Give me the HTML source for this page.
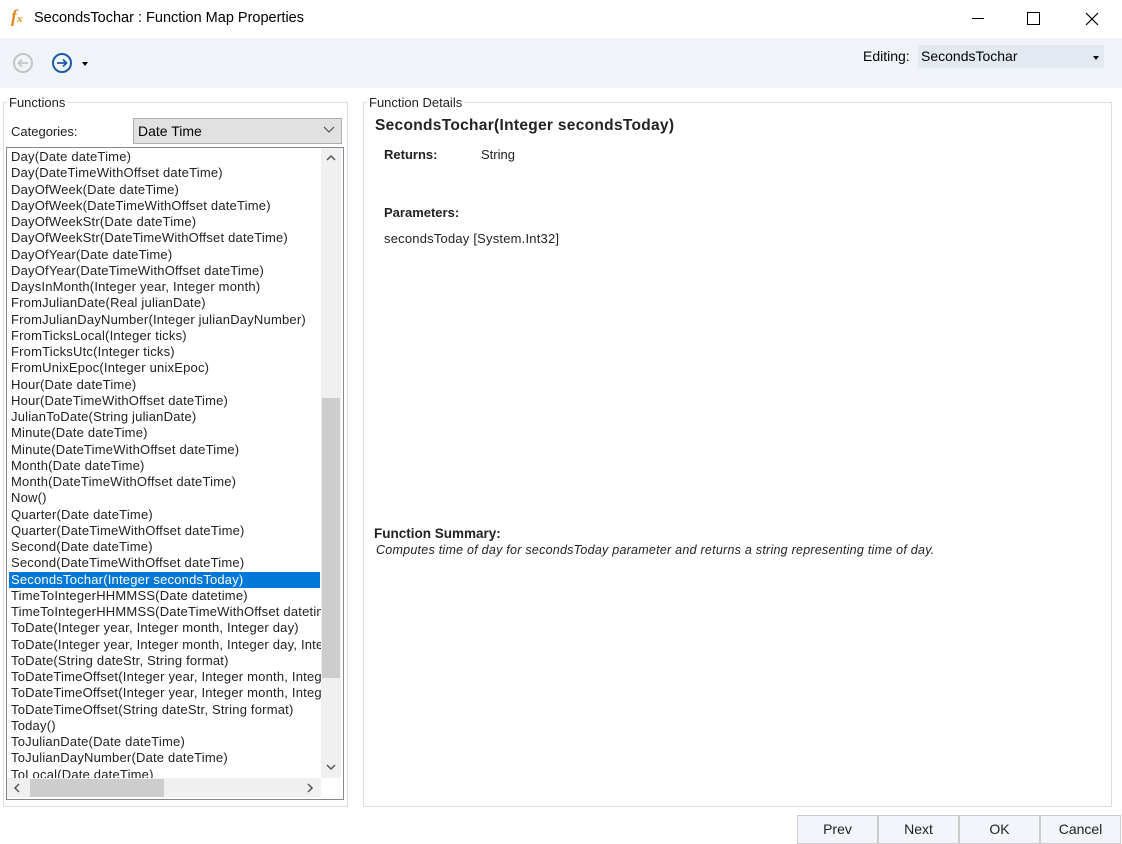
<!DOCTYPE html><html><head><style>
body{margin:0;width:1122px;height:844px;background:#fff;font-family:"Liberation Sans",sans-serif;position:relative;overflow:hidden;color:#000}
.a{position:absolute}
.li{position:absolute;left:11px;font-size:13px;letter-spacing:0.2px;white-space:nowrap;line-height:16px;color:#222}
.btn{position:absolute;top:815px;width:79px;height:27px;border:1px solid #ccc;background:#f2f5f9;font-size:14px;text-align:center;line-height:27px;color:#222}
</style></head><body>
<div class="a" style="left:11px;top:6px;font:italic bold 18px 'Liberation Serif',serif;color:#e08a1e">f<span style="font-size:11px">x</span></div>
<div class="a" style="left:34px;top:10px;font-size:14.5px">SecondsTochar : Function Map Properties</div>
<div class="a" style="left:972px;top:18px;width:12px;height:1px;background:#000"></div>
<div class="a" style="left:1027px;top:12px;width:11px;height:11px;border:1px solid #000"></div>
<svg class="a" style="left:1085px;top:12px" width="14" height="14"><path d="M1 1L13 13M13 1L1 13" stroke="#000" stroke-width="1.2"/></svg>
<div class="a" style="left:0;top:38px;width:1122px;height:50px;background:#f0f4f9"></div>
<svg class="a" style="left:12px;top:52px" width="22" height="22"><circle cx="11" cy="11" r="9" fill="none" stroke="#c4c4c4" stroke-width="2"/><path d="M16 11H7M10 7.5L6.5 11 10 14.5" fill="none" stroke="#c4c4c4" stroke-width="1.8"/></svg>
<svg class="a" style="left:51px;top:52px" width="22" height="22"><circle cx="11" cy="11" r="9" fill="none" stroke="#1e5aa8" stroke-width="2"/><path d="M6 11H15M12 7.5L15.5 11 12 14.5" fill="none" stroke="#1e5aa8" stroke-width="1.8"/></svg>
<div class="a" style="left:82px;top:62px;border:3px solid transparent;border-top:4px solid #000"></div>
<div class="a" style="left:863px;top:48px;font-size:14px">Editing:</div>
<div class="a" style="left:918px;top:45px;width:186px;height:23px;background:#e3e9f0"></div>
<div class="a" style="left:921px;top:48px;font-size:14px">SecondsTochar</div>
<div class="a" style="left:1093px;top:56px;border:3px solid transparent;border-top:4px solid #000"></div>
<div class="a" style="left:3px;top:102px;width:343px;height:703px;border:1px solid #dcdcdc"></div>
<div class="a" style="left:7px;top:95px;background:#fff;padding:0 2px;font-size:13px;color:#222">Functions</div>
<div class="a" style="left:11px;top:124px;font-size:13px;color:#222">Categories:</div>
<div class="a" style="left:133px;top:118px;width:207px;height:24px;border:1px solid #adadad;background:#e1e1e1"></div>
<div class="a" style="left:138px;top:123px;font-size:14px">Date Time</div>
<svg class="a" style="left:323px;top:126px" width="12" height="8"><path d="M1 1l5 5 5-5" fill="none" stroke="#444"/></svg>
<div class="a" style="left:6px;top:147px;width:336px;height:651px;border:1px solid #828790"></div>
<div class="a" style="left:321px;top:148px;width:20px;height:630px;background:#f0f0f0"></div>
<div class="a" style="left:322px;top:398px;width:18px;height:280px;background:#cdcdcd"></div>
<div class="a" style="left:7px;top:778px;width:314px;height:19px;background:#f0f0f0"></div>
<div class="a" style="left:30px;top:779px;width:134px;height:18px;background:#cdcdcd"></div>
<svg class="a" style="left:325px;top:154px" width="12" height="8"><path d="M2 6l4-4 4 4" fill="none" stroke="#555" stroke-width="1.5"/></svg>
<svg class="a" style="left:325px;top:763px" width="12" height="8"><path d="M2 2l4 4 4-4" fill="none" stroke="#555" stroke-width="1.5"/></svg>
<svg class="a" style="left:13px;top:782px" width="8" height="12"><path d="M6 2L2 6l4 4" fill="none" stroke="#555" stroke-width="1.5"/></svg>
<svg class="a" style="left:306px;top:782px" width="8" height="12"><path d="M2 2l4 4-4 4" fill="none" stroke="#555" stroke-width="1.5"/></svg>
<div class="a" style="left:9px;top:572px;width:311px;height:16px;background:#0078d7"></div>
<div class="a" style="left:7px;top:149px;width:314px;height:629px;overflow:hidden">
<div style="position:relative;left:-7px;top:0">
<div class="li" style="top:0">Day(Date dateTime)</div>
<div class="li" style="top:16.25px">Day(DateTimeWithOffset dateTime)</div>
<div class="li" style="top:32.5px">DayOfWeek(Date dateTime)</div>
<div class="li" style="top:48.75px">DayOfWeek(DateTimeWithOffset dateTime)</div>
<div class="li" style="top:65px">DayOfWeekStr(Date dateTime)</div>
<div class="li" style="top:81.25px">DayOfWeekStr(DateTimeWithOffset dateTime)</div>
<div class="li" style="top:97.5px">DayOfYear(Date dateTime)</div>
<div class="li" style="top:113.75px">DayOfYear(DateTimeWithOffset dateTime)</div>
<div class="li" style="top:130px">DaysInMonth(Integer year, Integer month)</div>
<div class="li" style="top:146.25px">FromJulianDate(Real julianDate)</div>
<div class="li" style="top:162.5px">FromJulianDayNumber(Integer julianDayNumber)</div>
<div class="li" style="top:178.75px">FromTicksLocal(Integer ticks)</div>
<div class="li" style="top:195px">FromTicksUtc(Integer ticks)</div>
<div class="li" style="top:211.25px">FromUnixEpoc(Integer unixEpoc)</div>
<div class="li" style="top:227.5px">Hour(Date dateTime)</div>
<div class="li" style="top:243.75px">Hour(DateTimeWithOffset dateTime)</div>
<div class="li" style="top:260px">JulianToDate(String julianDate)</div>
<div class="li" style="top:276.25px">Minute(Date dateTime)</div>
<div class="li" style="top:292.5px">Minute(DateTimeWithOffset dateTime)</div>
<div class="li" style="top:308.75px">Month(Date dateTime)</div>
<div class="li" style="top:325px">Month(DateTimeWithOffset dateTime)</div>
<div class="li" style="top:341.25px">Now()</div>
<div class="li" style="top:357.5px">Quarter(Date dateTime)</div>
<div class="li" style="top:373.75px">Quarter(DateTimeWithOffset dateTime)</div>
<div class="li" style="top:390px">Second(Date dateTime)</div>
<div class="li" style="top:406.25px">Second(DateTimeWithOffset dateTime)</div>
<div class="li" style="top:422.5px;color:#fff">SecondsTochar(Integer secondsToday)</div>
<div class="li" style="top:438.75px">TimeToIntegerHHMMSS(Date datetime)</div>
<div class="li" style="top:455px">TimeToIntegerHHMMSS(DateTimeWithOffset datetime)</div>
<div class="li" style="top:471.25px">ToDate(Integer year, Integer month, Integer day)</div>
<div class="li" style="top:487.5px">ToDate(Integer year, Integer month, Integer day, Integer hour)</div>
<div class="li" style="top:503.75px">ToDate(String dateStr, String format)</div>
<div class="li" style="top:520px">ToDateTimeOffset(Integer year, Integer month, Integer day)</div>
<div class="li" style="top:536.25px">ToDateTimeOffset(Integer year, Integer month, Integer day)</div>
<div class="li" style="top:552.5px">ToDateTimeOffset(String dateStr, String format)</div>
<div class="li" style="top:568.75px">Today()</div>
<div class="li" style="top:585px">ToJulianDate(Date dateTime)</div>
<div class="li" style="top:601.25px">ToJulianDayNumber(Date dateTime)</div>
<div class="li" style="top:617.5px">ToLocal(Date dateTime)</div>
</div></div>
<div class="a" style="left:363px;top:102px;width:747px;height:703px;border:1px solid #dcdcdc"></div>
<div class="a" style="left:367px;top:95px;background:#fff;padding:0 2px;font-size:13px;color:#222">Function Details</div>
<div class="a" style="left:375px;top:117px;font-size:15.5px;letter-spacing:0.3px;font-weight:bold;color:#222">SecondsTochar(Integer secondsToday)</div>
<div class="a" style="left:384px;top:147px;font-size:13px;font-weight:bold;color:#222">Returns:</div>
<div class="a" style="left:481px;top:147px;font-size:13px;color:#222">String</div>
<div class="a" style="left:384px;top:205px;font-size:13px;font-weight:bold;color:#222">Parameters:</div>
<div class="a" style="left:384px;top:231px;font-size:13px;letter-spacing:0.2px;color:#222">secondsToday [System.Int32]</div>
<div class="a" style="left:374px;top:526px;font-size:13.5px;font-weight:bold;color:#222">Function Summary:</div>
<div class="a" style="left:376px;top:543px;font-size:12.5px;letter-spacing:0.25px;font-style:italic;color:#222">Computes time of day for secondsToday parameter and returns a string representing time of day.</div>
<div class="btn" style="left:797px">Prev</div>
<div class="btn" style="left:878px">Next</div>
<div class="btn" style="left:959px">OK</div>
<div class="btn" style="left:1040px">Cancel</div>
</body></html>
